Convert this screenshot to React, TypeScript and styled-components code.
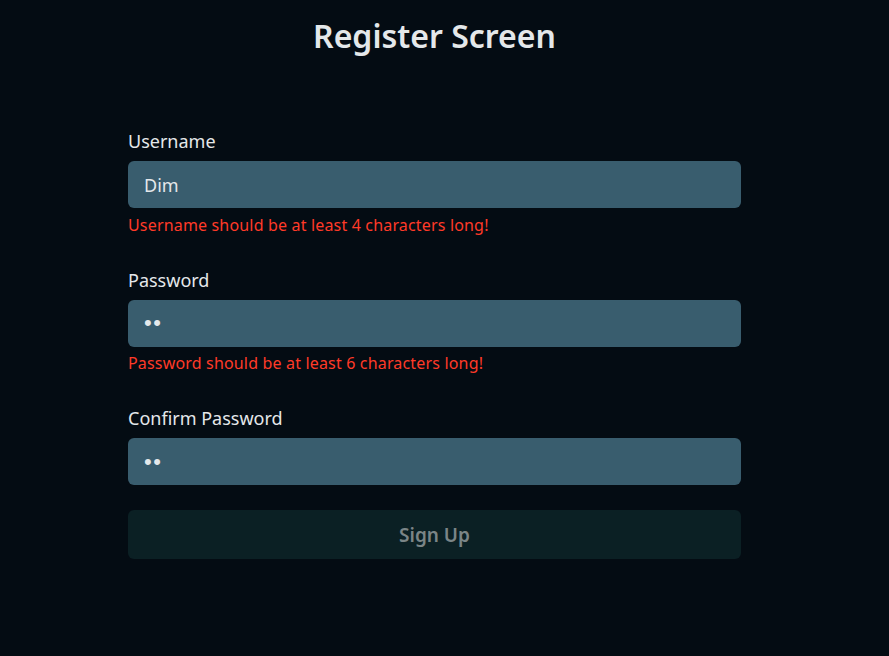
import React from "react";
import styled, { createGlobalStyle } from "styled-components";

const Global = createGlobalStyle`
  html, body { margin: 0; padding: 0; background: #040c13; }
  body { font-family: "Noto Sans", "Open Sans", sans-serif; color: #e4e8ea; }
  * { box-sizing: border-box; }
`;

const Page = styled.div`
  min-height: 656px;
  padding: 12px 20px 0 0;
  display: flex;
  flex-direction: column;
  align-items: center;
`;

const Title = styled.h1`
  margin: 0;
  font-size: 32px;
  font-weight: 600;
  line-height: 48px;
  color: #e4e8ea;
`;

const Form = styled.form`
  width: 613px;
  margin-top: 68px;
  display: flex;
  flex-direction: column;
`;

const Field = styled.div`
  display: flex;
  flex-direction: column;
  margin-bottom: 30px;
`;

const Label = styled.label`
  font-size: 18px;
  line-height: 26px;
  margin-bottom: 7px;
  color: #e4e8ea;
`;

const Input = styled.input`
  height: 47px;
  border: none;
  border-radius: 6px;
  background: #395d6e;
  padding: 0 16px;
  font-family: inherit;
  font-size: 18px;
  color: #e4e8ea;
  outline: none;

  &[type="password"] {
    font-family: "Liberation Sans", sans-serif;
    font-size: 22px;
    letter-spacing: 1.5px;
  }
`;

const Error = styled.div`
  margin-top: 4.5px;
  font-size: 16px;
  line-height: 24px;
  letter-spacing: 0.17px;
  color: #ff3a28;
`;

const Button = styled.button`
  margin-top: -5px;
  height: 49px;
  border: none;
  border-radius: 6px;
  background: #0b2024;
  color: #7b8587;
  font-family: inherit;
  font-size: 19px;
  font-weight: 600;
`;

export default function App() {
  return (
    <>
      <Global />
      <Page>
        <Title>Register Screen</Title>
        <Form onSubmit={(e) => e.preventDefault()}>
          <Field>
            <Label>Username</Label>
            <Input defaultValue="Dim" />
            <Error>Username should be at least 4 characters long!</Error>
          </Field>
          <Field>
            <Label>Password</Label>
            <Input type="password" defaultValue="12" />
            <Error>Password should be at least 6 characters long!</Error>
          </Field>
          <Field>
            <Label>Confirm Password</Label>
            <Input type="password" defaultValue="12" />
          </Field>
          <Button type="submit" disabled>Sign Up</Button>
        </Form>
      </Page>
    </>
  );
}
